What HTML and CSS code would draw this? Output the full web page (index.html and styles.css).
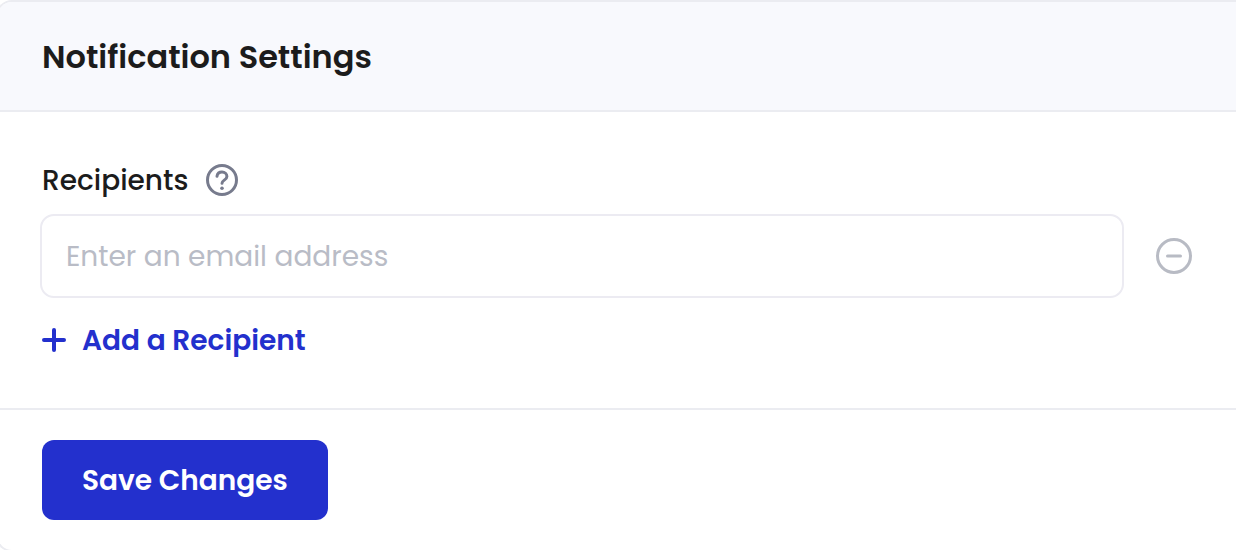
FILE: index.html
```html
<!DOCTYPE html>
<html lang="en">
<head>
<meta charset="utf-8">
<title>Notification Settings</title>
<link rel="stylesheet" href="styles.css">
</head>
<body>
<form class="card">
  <header class="card-header"><h1 class="title">Notification Settings</h1></header>
  <div class="card-body">
    <div class="label-row">
      <label class="label" for="email">Recipients</label>
      <button class="icon-button" type="button" aria-label="About recipients">
        <svg width="32" height="32" viewBox="0 0 32 32" fill="none" stroke="currentColor" stroke-width="3" stroke-linecap="round" stroke-linejoin="round"><circle cx="16" cy="16" r="14.5"/><path d="M11 12.2C11.4 9.8 13.4 8.1 16 8.1C18.9 8.1 20.9 10 20.9 12.4C20.9 16 16 16.2 16 19.2"/><circle cx="16" cy="24.2" r="1.8" fill="currentColor" stroke="none"/></svg>
      </button>
    </div>
    <div class="field-row">
      <input class="input" id="email" type="email" placeholder="Enter an email address">
      <button class="icon-button remove" type="button" aria-label="Remove recipient">
        <svg width="36" height="36" viewBox="0 0 36 36" fill="none" stroke="currentColor" stroke-width="3" stroke-linecap="round"><circle cx="18" cy="18" r="16.5"/><path d="M11.5 18h13"/></svg>
      </button>
    </div>
    <button class="add" type="button">
      <svg width="24" height="24" viewBox="0 0 24 24" fill="none" stroke="currentColor" stroke-width="4" stroke-linecap="round"><path d="M12 2v20M2 12h20"/></svg>
      <span class="button-text">Add a Recipient</span>
    </button>
  </div>
  <footer class="card-footer"><button class="save" type="submit">Save Changes</button></footer>
</form>
</body>
</html>
```
FILE: styles.css
```css
* { box-sizing: border-box; }
body {
  margin: 0;
  background: #fff;
  color: #1c1c1c;
  font-family: Poppins, Inter, "Open Sans", sans-serif;
  font-size: 28px;
}
button, input { font: inherit; }
button { border: 0; padding: 0; background: none; cursor: pointer; }
svg { display: block; flex: none; }
.card {
  margin-left: -4px;
  border: 2px solid #ebecf1;
  border-right: 0;
  border-radius: 16px 0 0 16px;
  overflow: hidden;
}
.card-header {
  padding: 31px 44px 29px;
  background: #f8f9fd;
  border-bottom: 2px solid #ebecf1;
}
.title { margin: 0; font-size: 32px; line-height: 48px; font-weight: 600; }
.card-body { padding: 48px 44px 48px 42px; }
.label-row { display: flex; align-items: center; gap: 18px; padding: 0 2px; }
.label { padding-top: 2px; line-height: 38px; font-weight: 500; }
.icon-button { color: #777b8d; }
.field-row { display: flex; align-items: center; gap: 32px; margin-top: 14px; }
.input {
  flex: 1;
  min-width: 0;
  height: 84px;
  padding: 2px 24px 0;
  border: 2px solid #ecebf2;
  border-radius: 14px;
  background: #fff;
  color: inherit;
}
.input::placeholder { color: #b9bcc6; opacity: 1; }
.remove { color: #b8bbc4; }
.add {
  display: flex;
  align-items: center;
  gap: 16px;
  margin-top: 22px;
  padding: 0 2px;
  color: #2330cd;
  font-weight: 600;
}
.button-text { padding-top: 2px; line-height: 38px; }
.card-footer { padding: 30px 44px; border-top: 2px solid #ebecf1; }
.save {
  padding: 21px 40px 19px;
  border-radius: 12px;
  background: #2330cd;
  color: #fff;
  font-weight: 600;
  line-height: 40px;
}
```
